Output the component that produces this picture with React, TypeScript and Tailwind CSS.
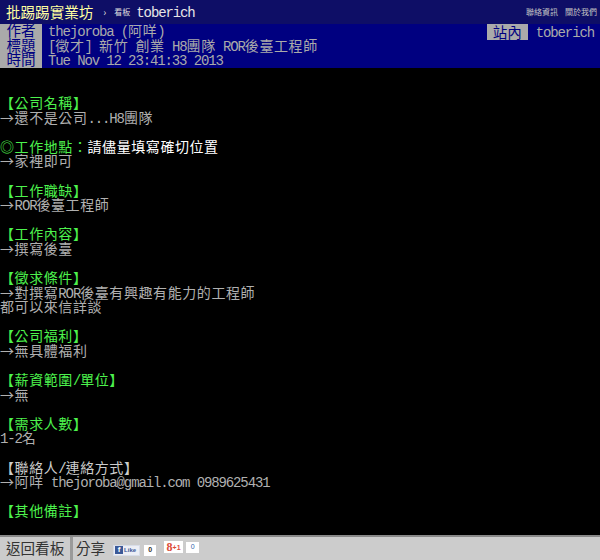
const CJK = 'font-["Noto_Sans_CJK_TC","Liberation_Serif",serif]';

// latin runs are half the width of the CJK cells, as in the terminal font
function Term({text}: {text: string}) {
  const runs = text.match(/[\x20-\x7e]+|[^\x20-\x7e]+/g) ?? [];
  return (
    <>
      {runs.map((run, i) =>
        /^[\x20-\x7e]/.test(run) ? (
          <span key={i} className="font-['Liberation_Mono',monospace] text-[14px] tracking-[-1.12px]">{run}</span>
        ) : (
          <span key={i} className="text-[14px] tracking-[0.58px]">{run}</span>
        )
      )}
    </>
  );
}

type Line = {text: string; color?: string; extra?: string};

const GREEN = 'text-[#4df24d]';

const LINES: Line[] = [
  {text: ''},
  {text: ''},
  {text: '【公司名稱】', color: GREEN},
  {text: '→還不是公司...H8團隊'},
  {text: ''},
  {text: '◎工作地點：', color: GREEN, extra: '請儘量填寫確切位置'},
  {text: '→家裡即可'},
  {text: ''},
  {text: '【工作職缺】', color: GREEN},
  {text: '→ROR後臺工程師'},
  {text: ''},
  {text: '【工作內容】', color: GREEN},
  {text: '→撰寫後臺'},
  {text: ''},
  {text: '【徵求條件】', color: GREEN},
  {text: '→對撰寫ROR後臺有興趣有能力的工程師'},
  {text: '都可以來信詳談'},
  {text: ''},
  {text: '【公司福利】', color: GREEN},
  {text: '→無具體福利'},
  {text: ''},
  {text: '【薪資範圍/單位】', color: GREEN},
  {text: '→無'},
  {text: ''},
  {text: '【需求人數】', color: GREEN},
  {text: '1-2名'},
  {text: ''},
  {text: '【聯絡人/連絡方式】', color: 'text-[#cccccc]'},
  {text: '→阿咩 thejoroba@gmail.com 0989625431'},
  {text: ''},
  {text: '【其他備註】', color: GREEN}
];

const META = [
  {label: '作者', value: 'thejoroba (阿咩)'},
  {label: '標題', value: '[徵才] 新竹 創業 H8團隊 ROR後臺工程師'},
  {label: '時間', value: 'Tue Nov 12 23:41:33 2013'}
];

export default function App() {
  return (
    <div className={`flex h-[560px] w-[600px] flex-col overflow-hidden bg-black text-[14.55px] leading-[14.55px] ${CJK}`}>
      <nav className="flex h-6 shrink-0 items-center bg-[#0e0e66] pl-1.5 pr-[3px]">
        <span className="text-[#ffffa0]">批踢踢實業坊</span>
        <span className="ml-[10px] text-[10px] text-[#dddddd]">›</span>
        <span className="ml-2 text-[8px] text-[#dddddd]">看板</span>
        <span className="ml-[6px] text-[#e6e6e6]"><Term text="toberich" /></span>
        <span className="ml-auto flex gap-[7px] text-[8px] text-[#c4c4c4]">
          <span>聯絡資訊</span>
          <span>關於我們</span>
        </span>
      </nav>

      <header className="relative flex h-11 shrink-0 bg-[#000080]">
        <div className="flex w-[42px] shrink-0 flex-col items-center bg-[#aaaaaa] text-[#000080]">
          {META.map((row) => <div key={row.label} className="h-[14.6px] -translate-y-px text-[14.55px]">{row.label}</div>)}
        </div>
        <div className="pl-[6px] text-[#aaaaaa]">
          {META.map((row) => (
            <div key={row.label} className="h-[14.6px] -translate-y-px whitespace-pre"><Term text={row.value} /></div>
          ))}
        </div>
        <div className="absolute right-[6px] top-0 flex">
          <span className="flex h-4 w-[41px] items-center justify-center bg-[#aaaaaa] text-[#000080]">站內</span>
          <span className="ml-2 text-[#aaaaaa]"><Term text="toberich" /></span>
        </div>
      </header>

      <main className="-mt-[2px] min-h-0 flex-1 text-[#b0b0b0]">
        {LINES.map((line, i) => (
          <div key={i} className={`h-[14.58px] whitespace-pre ${line.color ?? ''}`}>
            <Term text={line.text} />
            {line.extra && <span className="text-white"><Term text={line.extra} /></span>}
          </div>
        ))}
      </main>

      <footer className="flex h-[25px] shrink-0 items-center border-t-2 border-[#888888] bg-[#cccccc] text-[#333333]">
        <span className="w-[70px] pl-1.5">返回看板</span>
        <span className="h-full w-[3px] bg-[#9a9a9a]" />
        <span className="ml-[3px]">分享</span>
        <span className="ml-[8px] mt-[3px] flex h-[11px] w-[27px] items-center gap-[1px] border border-[#d8dde8] bg-[#eceef5] pl-[1px] font-['Liberation_Sans',sans-serif] text-[6px] font-bold text-[#3b5998]">
          <span className="flex h-[8px] w-[8px] items-center justify-center bg-[#3b5998] text-[8px] text-white">f</span>
          Like
        </span>
        <span className="ml-[4px] mt-[3px] flex h-[11px] w-[12px] items-center justify-center bg-white font-['Liberation_Sans',sans-serif] text-[7px] font-bold text-[#333333]">0</span>
        <span className="ml-[8px] -mt-[3px] flex h-[12px] w-[19px] items-center justify-center bg-white font-['Liberation_Serif',serif] text-[12px] font-bold leading-none text-[#dd4b39]">8<span className="font-['Liberation_Sans',sans-serif] text-[7px]">+1</span></span>
        <span className="ml-[3px] -mt-[3px] flex h-[11px] w-[13px] items-center justify-center bg-white font-['Liberation_Sans',sans-serif] text-[7px] text-[#3366aa]">0</span>
      </footer>
    </div>
  );
}
